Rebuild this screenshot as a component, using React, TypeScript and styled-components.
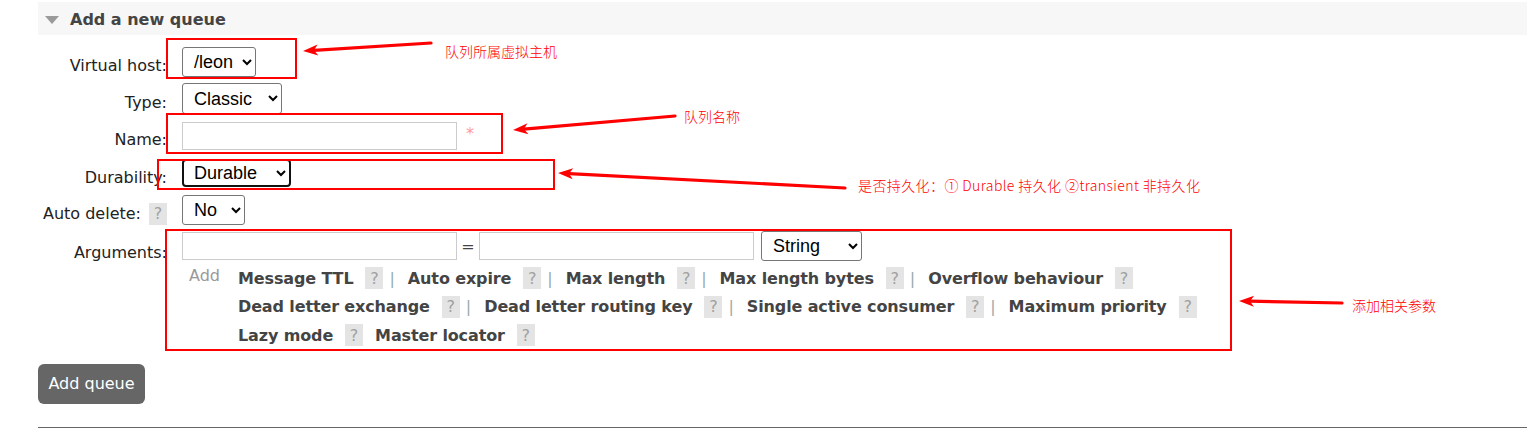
import React from 'react';
import styled, { createGlobalStyle } from 'styled-components';

const GlobalStyle = createGlobalStyle`
  html, body { margin: 0; padding: 0; background: #fff; }
  body {
    font-family: "DejaVu Sans", Verdana, sans-serif;
    font-size: 16px;
    color: #222;
    width: 1527px;
    height: 433px;
    overflow: hidden;
  }
  * { box-sizing: border-box; }
`;

const Page = styled.div`
  position: relative;
  width: 1527px;
  height: 433px;
  padding: 2px 0 0 38px;
`;

const SectionHeader = styled.div`
  height: 33px;
  background: #f7f7f7;
  display: flex;
  align-items: center;
  padding-left: 7px;
  padding-top: 2px;
  gap: 11px;
`;

const Toggle = styled.span`
  width: 0;
  height: 0;
  border-left: 7.5px solid transparent;
  border-right: 7.5px solid transparent;
  border-top: 8px solid #9a9a9a;
  margin-top: 1px;
`;

const Title = styled.h2`
  margin: 0;
  font-size: 16px;
  font-weight: bold;
  color: #444;
`;

const Form = styled.div`
  margin-top: 8px;
  display: flex;
  flex-direction: column;
`;

const Row = styled.div`
  display: grid;
  grid-template-columns: 129px auto;
  column-gap: 15px;
  align-items: start;
`;

const Label = styled.label<{ $drop?: number }>`
  height: 37px;
  display: flex;
  justify-content: flex-end;
  align-items: center;
  padding-top: ${(p) => p.$drop ?? 8}px;
  gap: 8px;
  color: #222;
  white-space: nowrap;
`;

const Control = styled.div<{ $h?: number }>`
  height: ${(p) => p.$h ?? 37}px;
  display: flex;
  align-items: center;
`;

const Stack = styled.div`
  display: flex;
  flex-direction: column;
`;

const Select = styled.select<{ $w: number; $h: number; $focused?: boolean; $ml?: number }>`
  width: ${(p) => p.$w}px;
  height: ${(p) => p.$h}px;
  font-family: "Liberation Sans", Arial, sans-serif;
  font-size: 18px;
  color: #000;
  background: #fff;
  border: ${(p) => (p.$focused ? '2px solid #111' : '1px solid #767676')};
  border-radius: ${(p) => (p.$focused ? 4 : 3)}px;
  padding: 0 2px 0 ${(p) => (p.$focused ? 6 : 7)}px;
  margin: 0 0 0 ${(p) => p.$ml ?? 0}px;
`;

const TextInput = styled.input`
  width: 275px;
  height: 28px;
  border: 1px solid #ccc;
  padding: 2px 4px;
  font-family: "DejaVu Sans", sans-serif;
  font-size: 14px;
  margin: 0;
  background: #fff;
`;

const Required = styled.span`
  color: #f99;
  margin-left: 9px;
  font-size: 16px;
  margin-top: -4px;
`;

const Equals = styled.span`
  width: 22px;
  text-align: center;
  color: #444;
`;

const Help = styled.span`
  display: inline-flex;
  align-items: center;
  justify-content: center;
  width: 18px;
  height: 22px;
  background: #e4e4e4;
  color: #a0a0a0;
  font-weight: normal;
  font-size: 16px;
  letter-spacing: 0;
`;

const AddSection = styled.div`
  display: flex;
  padding-left: 7px;
`;

const AddText = styled.span`
  width: 49px;
  color: #999;
  height: 28px;
  line-height: 24px;
`;

const Links = styled.div`
  display: flex;
  flex-direction: column;
`;

const LinkLine = styled.div`
  height: 28.5px;
  display: flex;
  align-items: center;
`;

const Link = styled.span`
  display: inline-flex;
  align-items: center;
  gap: 12px;
  font-weight: bold;
  color: #444;
  white-space: nowrap;
  letter-spacing: -0.13px;
`;

const Sep = styled.span`
  color: #9aa;
  margin: 0 13px 0 6px;
`;

const Spacer = styled.span`
  width: 12px;
`;

const Button = styled.button`
  margin-top: 14px;
  width: 107px;
  height: 40px;
  background: #666;
  color: #fff;
  border: none;
  border-radius: 6px;
  font-family: "DejaVu Sans", Verdana, sans-serif;
  font-size: 16px;
  padding: 0;
`;

const Rule = styled.hr`
  margin: 23px 0 0 0;
  border: none;
  border-top: 1px solid #666;
  height: 0;
`;

/* ---------- annotation overlay ---------- */

const Overlay = styled.svg`
  position: absolute;
  left: 0;
  top: 0;
  pointer-events: none;
`;

const RedBox = styled.div<{ $x: number; $y: number; $w: number; $h: number }>`
  position: absolute;
  left: ${(p) => p.$x}px;
  top: ${(p) => p.$y}px;
  width: ${(p) => p.$w}px;
  height: ${(p) => p.$h}px;
  border: 2px solid #f00;
  pointer-events: none;
`;

const Note = styled.span<{ $x: number; $y: number; $ls?: number }>`
  position: absolute;
  left: ${(p) => p.$x}px;
  top: ${(p) => p.$y}px;
  font-family: "Noto Sans CJK SC", "Noto Sans", sans-serif;
  font-size: 14px;
  line-height: 16px;
  font-weight: 300;
  letter-spacing: ${(p) => p.$ls ?? 0}px;
  color: #f00;
  white-space: nowrap;
`;

type ArrowProps = { tip: [number, number]; tail: [number, number] };

const Arrow = ({ tip, tail }: ArrowProps) => {
  const [tx, ty] = tip;
  const [sx, sy] = tail;
  const dx = sx - tx;
  const dy = sy - ty;
  const len = Math.hypot(dx, dy);
  const ux = dx / len;
  const uy = dy / len;
  const headLen = 15;
  const headW = 5.5;
  const bx = tx + ux * headLen;
  const by = ty + uy * headLen;
  const nx = -uy;
  const ny = ux;
  const notchX = tx + ux * (headLen - 4);
  const notchY = ty + uy * (headLen - 4);
  const pts = [
    `${tx},${ty}`,
    `${bx + nx * headW},${by + ny * headW}`,
    `${notchX},${notchY}`,
    `${bx - nx * headW},${by - ny * headW}`,
  ].join(' ');
  return (
    <g>
      <line x1={notchX} y1={notchY} x2={sx} y2={sy} stroke="#f00" strokeWidth={3.2} strokeLinecap="round" />
      <polygon points={pts} fill="#f00" />
    </g>
  );
};

const linesRow1 = ['Message TTL', 'Auto expire', 'Max length', 'Max length bytes', 'Overflow behaviour'];
const linesRow2 = ['Dead letter exchange', 'Dead letter routing key', 'Single active consumer', 'Maximum priority'];

const ArgLink = ({ text }: { text: string }) => (
  <Link>
    {text}
    <Help>?</Help>
  </Link>
);

const SeparatedLine = ({ items }: { items: string[] }) => (
  <LinkLine>
    {items.map((t, i) => (
      <React.Fragment key={t}>
        {i > 0 && <Sep>|</Sep>}
        <ArgLink text={t} />
      </React.Fragment>
    ))}
  </LinkLine>
);

export default function App() {
  return (
    <>
      <GlobalStyle />
      <Page>
        <SectionHeader>
          <Toggle />
          <Title>Add a new queue</Title>
        </SectionHeader>

        <Form>
          <Row>
            <Label>Virtual host:</Label>
            <Control>
              <Select $w={74} $h={30} defaultValue="/leon">
                <option>/leon</option>
              </Select>
            </Control>
          </Row>
          <Row>
            <Label>Type:</Label>
            <Control>
              <Select $w={100} $h={31} defaultValue="Classic">
                <option>Classic</option>
                <option>Quorum</option>
              </Select>
            </Control>
          </Row>
          <Row>
            <Label>Name:</Label>
            <Control>
              <TextInput type="text" />
              <Required>*</Required>
            </Control>
          </Row>
          <Row>
            <Label $drop={9}>Durability:</Label>
            <Control>
              <Select $w={109} $h={28} $focused defaultValue="Durable">
                <option>Durable</option>
                <option>Transient</option>
              </Select>
            </Control>
          </Row>
          <Row>
            <Label>
              Auto delete: <Help>?</Help>
            </Label>
            <Control>
              <Select $w={63} $h={30} defaultValue="No">
                <option>No</option>
                <option>Yes</option>
              </Select>
            </Control>
          </Row>
          <Row>
            <Label $drop={11}>Arguments:</Label>
            <Stack>
              <Control $h={36}>
                <TextInput type="text" />
                <Equals>=</Equals>
                <TextInput type="text" />
                <Select $w={101} $h={30} $ml={7} defaultValue="String">
                  <option>String</option>
                  <option>Number</option>
                  <option>Boolean</option>
                  <option>List</option>
                </Select>
              </Control>
              <AddSection>
                <AddText>Add</AddText>
                <Links>
                  <SeparatedLine items={linesRow1} />
                  <SeparatedLine items={linesRow2} />
                  <LinkLine>
                    <ArgLink text="Lazy mode" />
                    <Spacer />
                    <ArgLink text="Master locator" />
                  </LinkLine>
                </Links>
              </AddSection>
            </Stack>
          </Row>
        </Form>

        <Button>Add queue</Button>
        <Rule />

        <RedBox $x={166} $y={38} $w={131} $h={41} />
        <RedBox $x={166} $y={113} $w={337} $h={41} />
        <RedBox $x={157} $y={159} $w={398} $h={31} />
        <RedBox $x={165} $y={229} $w={1067} $h={122} />

        <Overlay width={1527} height={433} viewBox="0 0 1527 433">
          <Arrow tip={[303, 51]} tail={[431, 43]} />
          <Arrow tip={[513, 130]} tail={[675, 116]} />
          <Arrow tip={[558, 173]} tail={[845, 188]} />
          <Arrow tip={[1239, 301]} tail={[1342, 303]} />
        </Overlay>

        <Note $x={445} $y={43}>队列所属虚拟主机</Note>
        <Note $x={684} $y={108}>队列名称</Note>
        <Note $x={858} $y={177} $ls={0.4}>是否持久化：① Durable 持久化 ②transient 非持久化</Note>
        <Note $x={1352} $y={297}>添加相关参数</Note>
      </Page>
    </>
  );
}
